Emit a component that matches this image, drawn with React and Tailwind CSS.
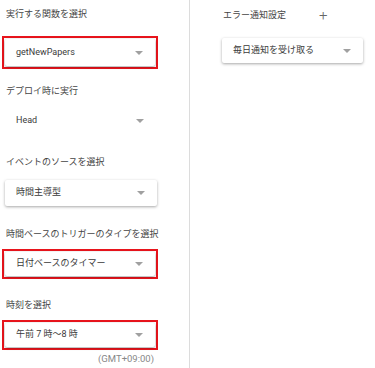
const font = { fontFamily: 'Roboto, "Noto Sans CJK JP", sans-serif' };

function Arrow() {
  return (
    <svg width="8" height="4" viewBox="0 0 8 4" className="shrink-0">
      <path d="M0 0 L8 0 L4 4 Z" fill="#a0a0a0" />
    </svg>
  );
}

function Card({ label, className = '' }) {
  return (
    <div className={`flex items-center justify-between bg-white rounded-[2px] shadow-[0_1px_3px_rgba(0,0,0,0.35)] pl-[11px] pr-[12px] text-[9px] text-[#3a3a3a] ${className}`}>
      <span>{label}</span>
      <Arrow />
    </div>
  );
}

function Boxed({ children, className = '' }) {
  return (
    <div className={`ml-[2px] w-[156px] border-2 border-[#e8141c] p-px ${className}`}>
      {children}
    </div>
  );
}

function Label({ children, className = '' }) {
  return <div className={`h-[12px] leading-[12px] text-[9px] text-[#444] pl-[6px] ${className}`}>{children}</div>;
}

export default function App() {
  return (
    <div className="w-[375px] h-[368px] bg-white flex" style={font}>
      <div className="w-[190px] border-r border-[#dcdcdc] pt-[8px]">
        <Label>実行する関数を選択</Label>
        <Boxed className="mt-[16px] h-[33px]">
          <Card label="getNewPapers" className="h-full" />
        </Boxed>

        <Label className="mt-[16px]">デプロイ時に実行</Label>
        <div className="mt-[10px] ml-[5px] w-[151px] h-[28px] flex items-center justify-between pl-[11px] pr-[12px] text-[9px] text-[#3a3a3a]">
          <span>Head</span>
          <Arrow />
        </div>

        <Label className="mt-[21px]">イベントのソースを選択</Label>
        <Card label="時間主導型" className="mt-[12px] ml-[5px] w-[152px] h-[26px]" />

        <Label className="mt-[22px]">時間ベースのトリガーのタイプを選択</Label>
        <Boxed className="mt-[9px] h-[30px]">
          <Card label="日付ベースのタイマー" className="h-full" />
        </Boxed>

        <Label className="mt-[20px]">時刻を選択</Label>
        <Boxed className="mt-[9px] h-[30px]">
          <Card label="午前 7 時〜8 時" className="h-full" />
        </Boxed>
        <div className="mt-[3px] w-[154px] text-right text-[9.5px] leading-[12px] text-[#888]">(GMT+09:00)</div>
      </div>

      <div className="flex-1 pt-[9px]">
        <div className="flex items-center h-[12px] pl-[33px]">
          <span className="text-[9px] text-[#444] leading-[12px]">エラー通知設定</span>
          <span className="ml-[33px] text-[15px] leading-[12px] text-[#666] font-light">+</span>
        </div>
        <Card label="毎日通知を受け取る" className="mt-[17px] ml-[32px] w-[141px] h-[25px]" />
      </div>
    </div>
  );
}
